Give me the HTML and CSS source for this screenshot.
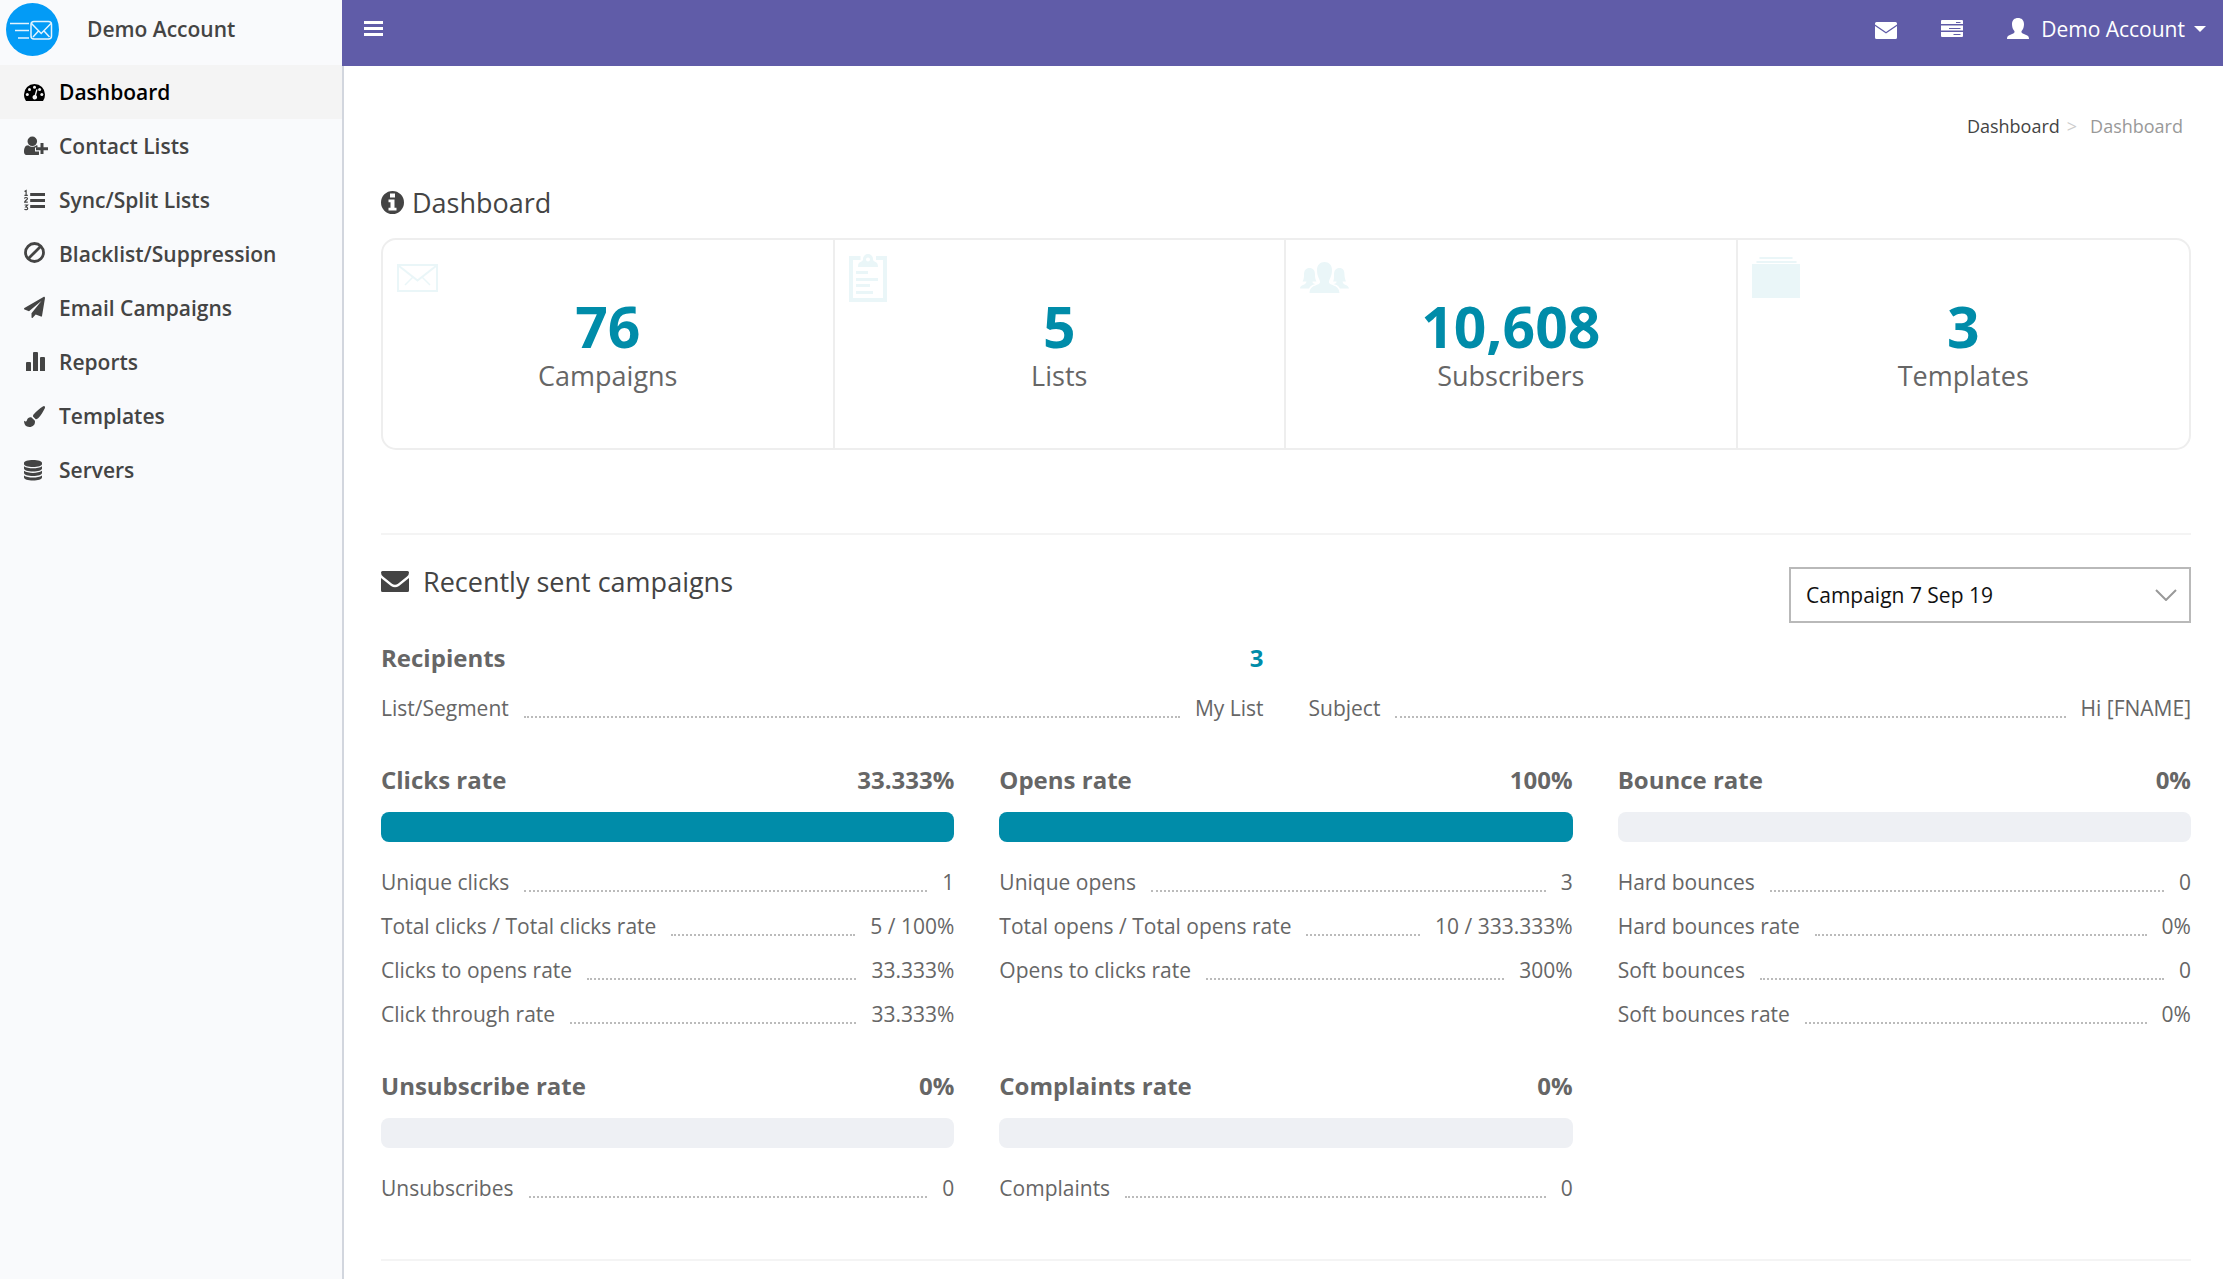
FILE: index.html
```html
<!DOCTYPE html>
<html lang="en">
<head>
<meta charset="utf-8">
<meta name="viewport" content="width=device-width, initial-scale=1">
<title>Dashboard</title>
<link rel="stylesheet" href="styles.css">
</head>
<body>
<div class="app">
  <aside class="sidebar">
    <a class="brand" href="#">
      <svg class="brand-logo" viewBox="0 0 53 53" aria-hidden="true">
        <circle cx="26.500" cy="26.500" r="26.500" fill="#039bf6"/>
        <g fill="none" stroke="#e4f4ff" stroke-width="1.500">
          <rect x="25" y="18.500" width="20.500" height="17.500" rx="3"/>
          <path d="M25.500 20.500l9.700 10 9.700-10M27 34l5.500-6M43.500 34L38 28"/>
          <path d="M4 20.500h19M9 27.500h14M12 35h11"/>
        </g>
      </svg>
      <span>Demo Account</span>
    </a>
    <nav class="menu" aria-label="Main">
      <a class="menu-item is-active" href="#">
        <svg class="menu-icon" viewBox="0 0 24 24" aria-hidden="true"><path fill="currentColor" fill-rule="evenodd" d="M10.500 4A10.500 10.500 0 0 0 0 14.500c0 2.200.600 4.200 1.700 5.900.200.300.500.600.900.600h15.800c.400 0 .700-.200.900-.600A10.900 10.900 0 0 0 21 14.500 10.500 10.500 0 0 0 10.500 4z"/><g class="gauge-marks"><circle cx="3.300" cy="14.500" r="1.500"/><circle cx="5.500" cy="9.500" r="1.500"/><circle cx="10.500" cy="7.200" r="1.500"/><circle cx="15.600" cy="9.500" r="1.500"/><circle cx="17.800" cy="14.500" r="1.500"/><path d="M12.300 9.200l1.300.400-1.500 5.700a2.300 2.300 0 1 1-1.400-.400z"/></g></svg>
        <span>Dashboard</span>
      </a>
      <a class="menu-item" href="#">
        <svg class="menu-icon" viewBox="0 0 24 24" aria-hidden="true"><path fill="currentColor" d="M8.300 2.500a4.800 4.800 0 1 1 0 9.600 4.800 4.800 0 0 1 0-9.600zM4.200 11.300c1.300 1 2.600 1.500 4.100 1.500s2.800-.500 4.100-1.500l1.100.300v1.900H11v4h4v3.300c-.500.300-1 .300-1.500.300H3.200C1.200 21.100 0 19.900 0 17.900c0-3 .700-6.600 4.200-6.600z"/><path fill="currentColor" d="M16.500 9h3v4.300H24v3h-4.500V20h-3v-3.700H12v-3h4.500z"/></svg>
        <span>Contact Lists</span>
      </a>
      <a class="menu-item" href="#">
        <svg class="menu-icon" viewBox="0 0 24 24" aria-hidden="true"><path fill="currentColor" d="M6.200 5H21v3H6.200zM6.200 11H21v3H6.200zM6.200 17H21v3H6.200z"/><path fill="none" stroke="currentColor" stroke-width="1.200" d="M.500 3.600l1.600-1v4.800M.400 7.300h3.400M.500 10.500c.300-1.400 3-1.300 3 .200 0 1-2.900 1.900-2.900 3.500h3.200M.600 17h2.900l-1.700 2c1 0 1.900.400 1.900 1.400 0 1.500-2.300 1.600-3.300.700"/></svg>
        <span>Sync/Split Lists</span>
      </a>
      <a class="menu-item" href="#">
        <svg class="menu-icon" viewBox="0 0 24 24" aria-hidden="true"><g fill="none" stroke="currentColor" stroke-width="2.800"><circle cx="10.500" cy="10.500" r="9"/><path d="M4.200 16.800L16.800 4.200"/></g></svg>
        <span>Blacklist/Suppression</span>
      </a>
      <a class="menu-item" href="#">
        <svg class="menu-icon" viewBox="0 0 24 24" aria-hidden="true"><path fill="currentColor" d="M20.700 1.200c.200.200.400.500.300.800l-3 18c-.100.500-.500.700-1 .600l-5.300-2.200-3 3.300c-.500.500-1.200.300-1.200-.500v-4L17.600 4.800 5 15.200.500 13.400c-.600-.300-.600-1.100-.100-1.400L19.900.800c.300-.100.600 0 .8.400z" /></svg>
        <span>Email Campaigns</span>
      </a>
      <a class="menu-item" href="#">
        <svg class="menu-icon" viewBox="0 0 24 24" aria-hidden="true"><path fill="currentColor" d="M2 13a1 1 0 0 1 1-1h3a1 1 0 0 1 1 1v8H2zM9 3a1 1 0 0 1 1-1h3a1 1 0 0 1 1 1v18H9zM16 8a1 1 0 0 1 1-1h3a1 1 0 0 1 1 1v13h-5z"/></svg>
        <span>Reports</span>
      </a>
      <a class="menu-item" href="#">
        <svg class="menu-icon" viewBox="0 0 24 24" aria-hidden="true"><path fill="currentColor" d="M20.500 2.300c.700.600.600 1.500.200 2.300-1.300 2.800-4 7.100-6.300 9.500-.900.900-1.600 1.300-2.700 1.100L9 12.500c-.200-1 .300-1.800 1-2.600 2.200-2.400 6-5.500 8.800-7.300.600-.400 1.200-.700 1.700-.300zM7.600 13.500l3.300 3.200c.700 3.800-2 6.300-5.600 6.300C2 23 .200 21 0 16.800c1.400 1.200 2.400 1 3-.800.700-2 2.600-3.200 4.600-2.500z"/></svg>
        <span>Templates</span>
      </a>
      <a class="menu-item" href="#">
        <svg class="menu-icon" viewBox="0 0 24 24" aria-hidden="true"><path fill="currentColor" d="M9 2c5 0 9 1.200 9 3v1c0 1.800-4 3-9 3S0 7.800 0 6V5c0-1.800 4-3 9-3zM0 8.200c2 1.500 5.400 2.100 9 2.100s7-.600 9-2.100v2.200c0 1.700-4 3-9 3s-9-1.300-9-3zM0 12.800c2 1.500 5.400 2.100 9 2.100s7-.600 9-2.100V15c0 1.700-4 3-9 3s-9-1.300-9-3zM0 17.400c2 1.500 5.400 2.100 9 2.100s7-.600 9-2.100v2.200c0 1.700-4 3-9 3s-9-1.300-9-3z"/></svg>
        <span>Servers</span>
      </a>
    </nav>
  </aside>

  <div class="page">
    <header class="topbar">
      <button class="icon-button" type="button" aria-label="Toggle menu">
        <svg class="icon-sm" viewBox="0 0 22 22" aria-hidden="true"><path fill="currentColor" d="M2 3h19v3H2zM2 9h19v3H2zM2 15h19v3H2z"/></svg>
      </button>
      <div class="topbar-actions">
        <button class="icon-button" type="button" aria-label="Messages">
          <svg class="icon-sm" viewBox="0 0 22 22" aria-hidden="true"><path fill="currentColor" d="M1.500 4h19q1.500 0 1.500 1.500v1L11 14 0 6.500v-1Q0 4 1.500 4zM0 8l11 7.500L22 8v11.500q0 1.500-1.500 1.500h-19Q0 21 0 19.500z"/></svg>
        </button>
        <button class="icon-button" type="button" aria-label="Queue">
          <svg class="icon-sm" viewBox="0 0 22 22" aria-hidden="true"><path fill="currentColor" fill-rule="evenodd" d="M1 2h20q1 0 1 1v3H0V3q0-1 1-1zm14 2v1h4.500V4zM0 7.500h22v5H0zM8 10v1h11.500v-1zM0 14h22v4q0 1-1 1H1q-1 0-1-1zm12.500 2v1h7v-1z"/></svg>
        </button>
        <button class="account" type="button">
          <svg class="icon-sm" viewBox="0 0 22 22" aria-hidden="true"><path fill="currentColor" d="M11 0c3.500 0 6 2 6 6.200 0 2.500-.8 5-2.200 6.500-.6.700-.4 2 .5 2.500l4.900 2.300c1.200.6 1.800 1.400 1.800 3.500H0c0-2.100.6-2.900 1.800-3.500l4.900-2.300c.9-.5 1.100-1.800.5-2.500C5.800 11.200 5 8.700 5 6.200 5 2 7.500 0 11 0z"/></svg>
          <span>Demo Account</span>
          <svg class="caret" viewBox="0 0 12 6" aria-hidden="true"><path fill="currentColor" d="M0 0h12L6 6z"/></svg>
        </button>
      </div>
    </header>

    <main class="content">
      <nav class="breadcrumb" aria-label="Breadcrumb">
        <a href="#">Dashboard</a><span class="separator">&gt;</span><span class="current">Dashboard</span>
      </nav>

      <h1 class="title">
        <svg class="icon-md" viewBox="0 0 24 24" aria-hidden="true"><path fill="currentColor" fill-rule="evenodd" d="M11.500 0a11.500 11.500 0 1 1 0 23 11.500 11.500 0 0 1 0-23zM9 2.500v4h5v-4zM7.500 8.500v2.700h2v5.600h-2v2.700h8v-2.700h-2V8.500z"/></svg>
        <span>Dashboard</span>
      </h1>

      <section class="stats" aria-label="Totals">
        <a class="stat" href="#">
          <svg class="stat-icon" viewBox="0 0 50 50" aria-hidden="true"><g fill="none" stroke="currentColor" stroke-width="2"><path d="M1 13h39v26H1zM2 14l18.500 14.500L39 14" /><path d="M16 25l-8 8M25 25l8 8" stroke-width="1.500"/></g></svg>
          <strong>76</strong><span>Campaigns</span>
        </a>
        <a class="stat" href="#">
          <svg class="stat-icon" viewBox="0 0 50 50" aria-hidden="true"><path fill="none" stroke="currentColor" stroke-width="4" d="M11.500 6H2v42h34V6h-9"/><path fill="currentColor" fill-rule="evenodd" d="M19 2a5 5 0 0 1 5 5c0 4 5 1 5 8H9c0-7 5-4 5-8a5 5 0 0 1 5-5zm0 3.500a1.300 1.300 0 0 0 0 4 1.300 1.300 0 0 0 0-4zM7 19h12v3H7zM7 26h22v3H7zM7 32h14v3H7zM7 39h17v3H7z"/></svg>
          <strong>5</strong><span>Lists</span>
        </a>
        <a class="stat" href="#">
          <svg class="stat-icon" viewBox="0 0 50 50" aria-hidden="true"><path fill="currentColor" d="M24.500 10c4.500 0 7.500 3 7.500 8 0 7-3 9-3 12 0 4 10 2 10.500 11H9.500C10 32 20 34 20 30c0-3-3-5-3-12 0-5 3-8 7.500-8zM9.500 16c3.500 0 5.500 2 5.500 7 0 3 .5 5 1.500 6.500h-4c0 2 1 2 3 2.500-4 1-5 2-6.500 4.500H0c0-4 6-3 6.500-7h-4C4 27 4 25 4 23c0-5 2-7 5.500-7zM39.500 16c3.500 0 5 2 5 7 0 2 .5 4 1.500 6.500h-3.500c.5 4 6 3 6.500 7h-9c-1.500-2.500-2.500-3.500-6.500-4.500 2-.5 3-.5 3-2.500h-3.500C34 28 34 26 34 23c0-5 2-7 5.500-7z"/></svg>
          <strong>10,608</strong><span>Subscribers</span>
        </a>
        <a class="stat" href="#">
          <svg class="stat-icon" viewBox="0 0 50 50" aria-hidden="true"><path fill="currentColor" d="M7.500 5h33v2h-33zM4.500 9h40v2h-40zM0 12h48v34H0z"/></svg>
          <strong>3</strong><span>Templates</span>
        </a>
      </section>

      <hr class="rule">

      <div class="section-head">
        <h2 class="title title-wide">
          <svg class="icon-lg" viewBox="0 0 28 22" aria-hidden="true"><path fill="currentColor" d="M1.500 0h25Q28 0 28 1.500 28 4 26 5.500l-9 7.200q-3 2.300-6 0l-9-7.200Q0 4 0 1.500 0 0 1.500 0zM0 7l10 8q4 2.600 8 0l10-8v12.500q0 1.500-1.500 1.500h-25Q0 21 0 19.500z"/></svg>
          <span>Recently sent campaigns</span>
        </h2>
        <div class="picker">
          <select class="picker-select" aria-label="Campaign"><option>Campaign 7 Sep 19</option></select>
          <svg class="picker-arrow" viewBox="0 0 22 12" aria-hidden="true"><path fill="none" stroke="#999" stroke-width="2" d="M1 1l10 10L21 1"/></svg>
        </div>
      </div>

      <div class="summary">
        <section class="metric">
          <h3 class="metric-head"><span>Recipients</span><a class="count" href="#">3</a></h3>
          <dl class="rows"><div class="row"><dt>List/Segment</dt><dd>My List</dd></div></dl>
        </section>
        <section class="metric metric-bottom">
          <dl class="rows"><div class="row"><dt>Subject</dt><dd>Hi [FNAME]</dd></div></dl>
        </section>
      </div>

      <div class="metrics">
        <section class="metric">
          <h3 class="metric-head"><span>Clicks rate</span><span>33.333%</span></h3>
          <div class="bar"><div class="bar-fill" style="width: 100%"></div></div>
          <dl class="rows">
            <div class="row"><dt>Unique clicks</dt><dd>1</dd></div>
            <div class="row"><dt>Total clicks / Total clicks rate</dt><dd>5 / 100%</dd></div>
            <div class="row"><dt>Clicks to opens rate</dt><dd>33.333%</dd></div>
            <div class="row"><dt>Click through rate</dt><dd>33.333%</dd></div>
          </dl>
        </section>
        <section class="metric">
          <h3 class="metric-head"><span>Opens rate</span><span>100%</span></h3>
          <div class="bar"><div class="bar-fill" style="width: 100%"></div></div>
          <dl class="rows">
            <div class="row"><dt>Unique opens</dt><dd>3</dd></div>
            <div class="row"><dt>Total opens / Total opens rate</dt><dd>10 / 333.333%</dd></div>
            <div class="row"><dt>Opens to clicks rate</dt><dd>300%</dd></div>
          </dl>
        </section>
        <section class="metric">
          <h3 class="metric-head"><span>Bounce rate</span><span>0%</span></h3>
          <div class="bar"><div class="bar-fill" style="width: 0%"></div></div>
          <dl class="rows">
            <div class="row"><dt>Hard bounces</dt><dd>0</dd></div>
            <div class="row"><dt>Hard bounces rate</dt><dd>0%</dd></div>
            <div class="row"><dt>Soft bounces</dt><dd>0</dd></div>
            <div class="row"><dt>Soft bounces rate</dt><dd>0%</dd></div>
          </dl>
        </section>
        <section class="metric">
          <h3 class="metric-head"><span>Unsubscribe rate</span><span>0%</span></h3>
          <div class="bar"><div class="bar-fill" style="width: 0%"></div></div>
          <dl class="rows"><div class="row"><dt>Unsubscribes</dt><dd>0</dd></div></dl>
        </section>
        <section class="metric">
          <h3 class="metric-head"><span>Complaints rate</span><span>0%</span></h3>
          <div class="bar"><div class="bar-fill" style="width: 0%"></div></div>
          <dl class="rows"><div class="row"><dt>Complaints</dt><dd>0</dd></div></dl>
        </section>
      </div>

      <hr class="rule">
    </main>
  </div>
</div>
</body>
</html>
```
FILE: styles.css
```css
* { box-sizing: border-box; }

body {
  margin: 0;
  background: #fff;
  color: #666;
  font-family: "Open Sans", "Noto Sans", sans-serif;
  font-size: 21px;
  line-height: 30px;
}

a { color: inherit; text-decoration: none; }
button { margin: 0; padding: 0; border: 0; background: none; color: inherit; font: inherit; cursor: pointer; }
h1, h2, h3, dl, dd { margin: 0; }
svg { display: block; flex: none; }

.app { display: flex; min-height: 100vh; }

/* Sidebar */
.sidebar {
  flex: none;
  width: 344px;
  background: #f9fafc;
  border-right: 2px solid #d2d6de;
  color: #444;
  font-weight: 600;
}
.brand { display: flex; align-items: center; gap: 28px; height: 65px; padding: 0 6px 7px; }
.brand-logo { width: 53px; height: 53px; }
.menu-item { display: flex; align-items: center; gap: 11px; height: 54px; padding: 0 24px; }
.menu-item.is-active { background: #f4f4f4; color: #000; }
.menu-icon { width: 24px; height: 24px; }
.gauge-marks { fill: #f4f4f4; }

/* Top bar */
.page { flex: 1; min-width: 0; }
.topbar {
  display: flex;
  justify-content: space-between;
  align-items: center;
  height: 66px;
  margin-left: -2px;
  padding: 0 17px 8px 20px;
  background: #605ca8;
  color: #fff;
}
.topbar-actions, .account { display: flex; align-items: center; }
.topbar-actions { gap: 44px; }
.account { gap: 12px; }
.icon-sm { width: 22px; height: 22px; }
.caret { width: 12px; height: 6px; }
.account .caret { margin-left: -3px; }

/* Content */
.content { padding: 45px 32px 16px 37px; }
.breadcrumb { display: flex; justify-content: flex-end; gap: 7px; padding-right: 8px; color: #444; font-size: 18px; }
.breadcrumb .separator { color: #ccc; }
.breadcrumb .current { padding-left: 6px; color: #999; }

.title { display: flex; align-items: center; gap: 7px; color: #444; font-size: 27px; font-weight: 400; line-height: 36px; }
h1.title { margin: 44px 0 17px; }
.title-wide { gap: 14px; }
.icon-md { width: 24px; height: 24px; }
.icon-lg { width: 28px; height: 22px; }

.stats { display: grid; grid-template-columns: repeat(4, 1fr); border: 2px solid #eee; border-radius: 15px; }
.stat {
  position: relative;
  display: flex;
  flex-direction: column;
  align-items: center;
  min-height: 208px;
  padding-top: 54px;
  border-right: 2px solid #eee;
  font-size: 27px;
  line-height: 36px;
}
.stat:last-child { border-right: 0; }
.stat strong { color: #008ca9; font-size: 57px; line-height: 64px; }
.stat-icon { position: absolute; left: 14px; top: 12px; width: 50px; height: 50px; color: #eaf6f8; }

.rule { height: 2px; margin: 83px 0 32px; border: 0; background: #f4f4f4; }
.metrics + .rule { margin: 49px 0 0; }

.section-head { display: flex; justify-content: space-between; align-items: flex-start; }
.section-head .title { margin-top: -3px; }
.picker { position: relative; width: 402px; }
.picker-select {
  width: 100%;
  height: 56px;
  padding: 0 48px 0 15px;
  border: 2px solid #b9b9b9;
  border-radius: 0;
  background: #fff;
  color: #111;
  font: inherit;
  appearance: none;
}
.picker-arrow { position: absolute; right: 14px; top: 22px; width: 22px; height: 12px; pointer-events: none; }

/* Campaign metrics */
.summary { display: grid; grid-template-columns: 1fr 1fr; gap: 45px; margin-top: 20px; }
.metrics { display: grid; grid-template-columns: repeat(3, 1fr); gap: 35px 45px; margin-top: 35px; }
.metric-bottom { display: flex; flex-direction: column; justify-content: flex-end; }
.metric-head { display: flex; justify-content: space-between; font-size: 24px; font-weight: 700; line-height: 30px; }
.count { color: #008ca9; }
.bar { height: 30px; margin: 17px 0 18px; border-radius: 8px; background: #eef0f4; overflow: hidden; }
.bar-fill { height: 100%; background: #008ca9; }
.row { display: flex; align-items: center; gap: 15px; height: 44px; }
.row::before { content: ""; order: 1; flex: 1; margin-top: 18px; border-bottom: 2px dotted #bbb; }
.row dt { order: 0; }
.row dd { order: 2; }
.summary .row { margin-top: 13px; }
```
